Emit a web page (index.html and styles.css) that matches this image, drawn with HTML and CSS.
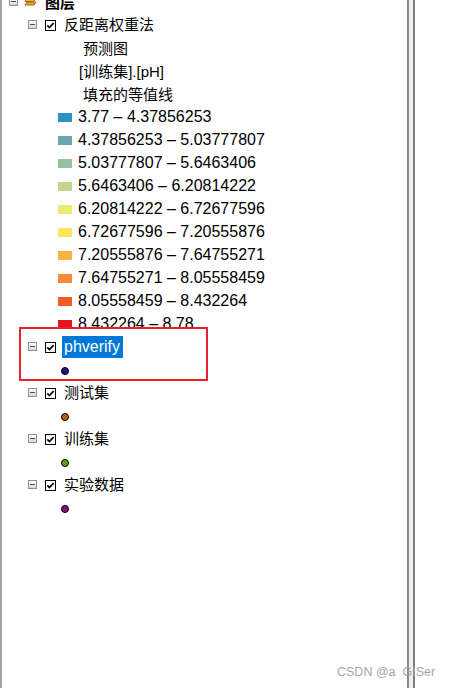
FILE: index.html
```html
<!DOCTYPE html>
<html lang="zh-CN">
<head>
<meta charset="utf-8">
<title>图层</title>
<link rel="stylesheet" href="styles.css">
</head>
<body>
<div class="window">
  <div class="toc">
    <ul class="tree">
      <li class="row root">
        <span class="exp"></span>
        <svg class="layers-icon" width="13" height="12" viewBox="0 0 13 12">
          <path d="M3 1 H12 L10 4 H1 Z" fill="#f3c04a" stroke="#a8691a" stroke-width="1"/>
          <path d="M3 4.5 H12 L10 7.5 H1 Z" fill="#f0b43c" stroke="#a8691a" stroke-width="1"/>
          <path d="M3 8 H12 L10 11 H1 Z" fill="#eaa52e" stroke="#a8691a" stroke-width="1"/>
        </svg>
        <span class="label zh bold">图层</span>
      </li>
      <li class="row lvl1">
        <span class="exp"></span>
        <svg class="chk" width="11" height="11" viewBox="0 0 11 11"><rect x="0.5" y="0.5" width="10" height="10" fill="#fff" stroke="#000"/><path d="M2.3 5.4 L4.4 7.6 L8.6 3.2" fill="none" stroke="#000" stroke-width="1.7"/></svg>
        <span class="label zh">反距离权重法</span>
      </li>
      <li class="row heading"><span class="zh">预测图</span></li>
      <li class="row heading field"><span class="zh">[训练集].[pH]</span></li>
      <li class="row heading"><span class="zh">填充的等值线</span></li>
      <li class="row legend"><span class="swatch c1"></span><span>3.77 – 4.37856253</span></li>
      <li class="row legend"><span class="swatch c2"></span><span>4.37856253 – 5.03777807</span></li>
      <li class="row legend"><span class="swatch c3"></span><span>5.03777807 – 5.6463406</span></li>
      <li class="row legend"><span class="swatch c4"></span><span>5.6463406 – 6.20814222</span></li>
      <li class="row legend"><span class="swatch c5"></span><span>6.20814222 – 6.72677596</span></li>
      <li class="row legend"><span class="swatch c6"></span><span>6.72677596 – 7.20555876</span></li>
      <li class="row legend"><span class="swatch c7"></span><span>7.20555876 – 7.64755271</span></li>
      <li class="row legend"><span class="swatch c8"></span><span>7.64755271 – 8.05558459</span></li>
      <li class="row legend"><span class="swatch c9"></span><span>8.05558459 – 8.432264</span></li>
      <li class="row legend"><span class="swatch c10"></span><span>8.432264 – 8.78</span></li>
      <li class="row lvl1">
        <span class="exp"></span>
        <svg class="chk" width="11" height="11" viewBox="0 0 11 11"><rect x="0.5" y="0.5" width="10" height="10" fill="#fff" stroke="#000"/><path d="M2.3 5.4 L4.4 7.6 L8.6 3.2" fill="none" stroke="#000" stroke-width="1.7"/></svg>
        <span class="label selected">phverify</span>
      </li>
      <li class="row point"><span class="dot d-blue"></span></li>
      <li class="row lvl1">
        <span class="exp"></span>
        <svg class="chk" width="11" height="11" viewBox="0 0 11 11"><rect x="0.5" y="0.5" width="10" height="10" fill="#fff" stroke="#000"/><path d="M2.3 5.4 L4.4 7.6 L8.6 3.2" fill="none" stroke="#000" stroke-width="1.7"/></svg>
        <span class="label zh">测试集</span>
      </li>
      <li class="row point"><span class="dot d-orange"></span></li>
      <li class="row lvl1">
        <span class="exp"></span>
        <svg class="chk" width="11" height="11" viewBox="0 0 11 11"><rect x="0.5" y="0.5" width="10" height="10" fill="#fff" stroke="#000"/><path d="M2.3 5.4 L4.4 7.6 L8.6 3.2" fill="none" stroke="#000" stroke-width="1.7"/></svg>
        <span class="label zh">训练集</span>
      </li>
      <li class="row point"><span class="dot d-green"></span></li>
      <li class="row lvl1">
        <span class="exp"></span>
        <svg class="chk" width="11" height="11" viewBox="0 0 11 11"><rect x="0.5" y="0.5" width="10" height="10" fill="#fff" stroke="#000"/><path d="M2.3 5.4 L4.4 7.6 L8.6 3.2" fill="none" stroke="#000" stroke-width="1.7"/></svg>
        <span class="label zh">实验数据</span>
      </li>
      <li class="row point"><span class="dot d-purple"></span></li>
    </ul>
    <div class="annot"></div>
  </div>
  <div class="splitter"></div>
  <div class="pane"></div>
  <div class="watermark">CSDN @a&nbsp;&nbsp;GISer</div>
</div>
</body>
</html>
```
FILE: styles.css
```css
html, body {
  margin: 0;
  padding: 0;
  background: #fff;
}

body {
  font-family: "Liberation Sans", "Noto Sans CJK SC", sans-serif;
  font-size: 16px;
  color: #000;
  overflow: hidden;
}

.window {
  position: relative;
  display: flex;
  height: 688px;
  width: 454px;
  overflow: hidden;
}

.toc {
  position: relative;
  width: 405px;
  border-left: 2px solid #a3a3a3;
  background: #fff;
}

.tree {
  list-style: none;
  margin: -10px 0 0 0;
  padding: 0;
}

.row {
  display: flex;
  align-items: center;
  height: 23px;
  white-space: nowrap;
}

.zh {
  font-size: 15px;
}

.bold {
  font-weight: bold;
}

.exp {
  position: relative;
  box-sizing: border-box;
  width: 9px;
  height: 9px;
  border: 1px solid #919191;
  background: linear-gradient(#ffffff, #d8d8d8);
  flex: none;
}

.exp::after {
  content: "";
  position: absolute;
  left: 1px;
  top: 3px;
  width: 5px;
  height: 1px;
  background: #3c4a8c;
}

.root {
  padding-left: 7px;
}

.root .layers-icon {
  margin-left: 6px;
  margin-top: -3px;
}

.root .label {
  margin-left: 8px;
}

.lvl1 {
  padding-left: 26px;
}

.lvl1 .chk {
  margin-left: 8px;
  margin-top: 2px;
  flex: none;
}

.lvl1 .label {
  margin-left: 6px;
  padding: 0 2px;
  line-height: 22px;
}

.label.selected {
  background: #0078d7;
  color: #fff;
  padding: 0 3px 0 2px;
}

.heading {
  padding-left: 81px;
}

.heading.field {
  padding-left: 77px;
}

.legend {
  padding-left: 56px;
}

.swatch {
  width: 14px;
  height: 9px;
  margin-right: 6px;
  margin-top: 1px;
  flex: none;
}

.c1 { background: #2c8fc8; }
.c2 { background: #6aa5b1; }
.c3 { background: #95c0a1; }
.c4 { background: #c1d58d; }
.c5 { background: #e8ec72; }
.c6 { background: #fde45b; }
.c7 { background: #fdb245; }
.c8 { background: #f98a39; }
.c9 { background: #f25c26; }
.c10 { background: #e8141c; }

.point {
  padding-left: 59px;
}

.dot {
  width: 6px;
  height: 6px;
  border: 1px solid #000;
  border-radius: 50%;
  margin-top: 2px;
}

.d-blue { background: #16168e; }
.d-orange { background: #b85f10; }
.d-green { background: #5aa412; }
.d-purple { background: #85107f; }

.annot {
  position: absolute;
  left: 17px;
  top: 327px;
  width: 189px;
  height: 54px;
  box-sizing: border-box;
  border: 2px solid #e8202a;
}

.splitter {
  width: 4px;
  border-left: 2px solid #8a8a8a;
  border-right: 2px solid #7c7c7c;
  background: #efefef;
  flex: none;
}

.pane {
  flex: 1;
  background: #fff;
}

.watermark {
  position: absolute;
  left: 337px;
  top: 665px;
  font-family: "Liberation Sans", sans-serif;
  font-size: 12.5px;
  color: #a6a6a6;
  white-space: nowrap;
}
```
